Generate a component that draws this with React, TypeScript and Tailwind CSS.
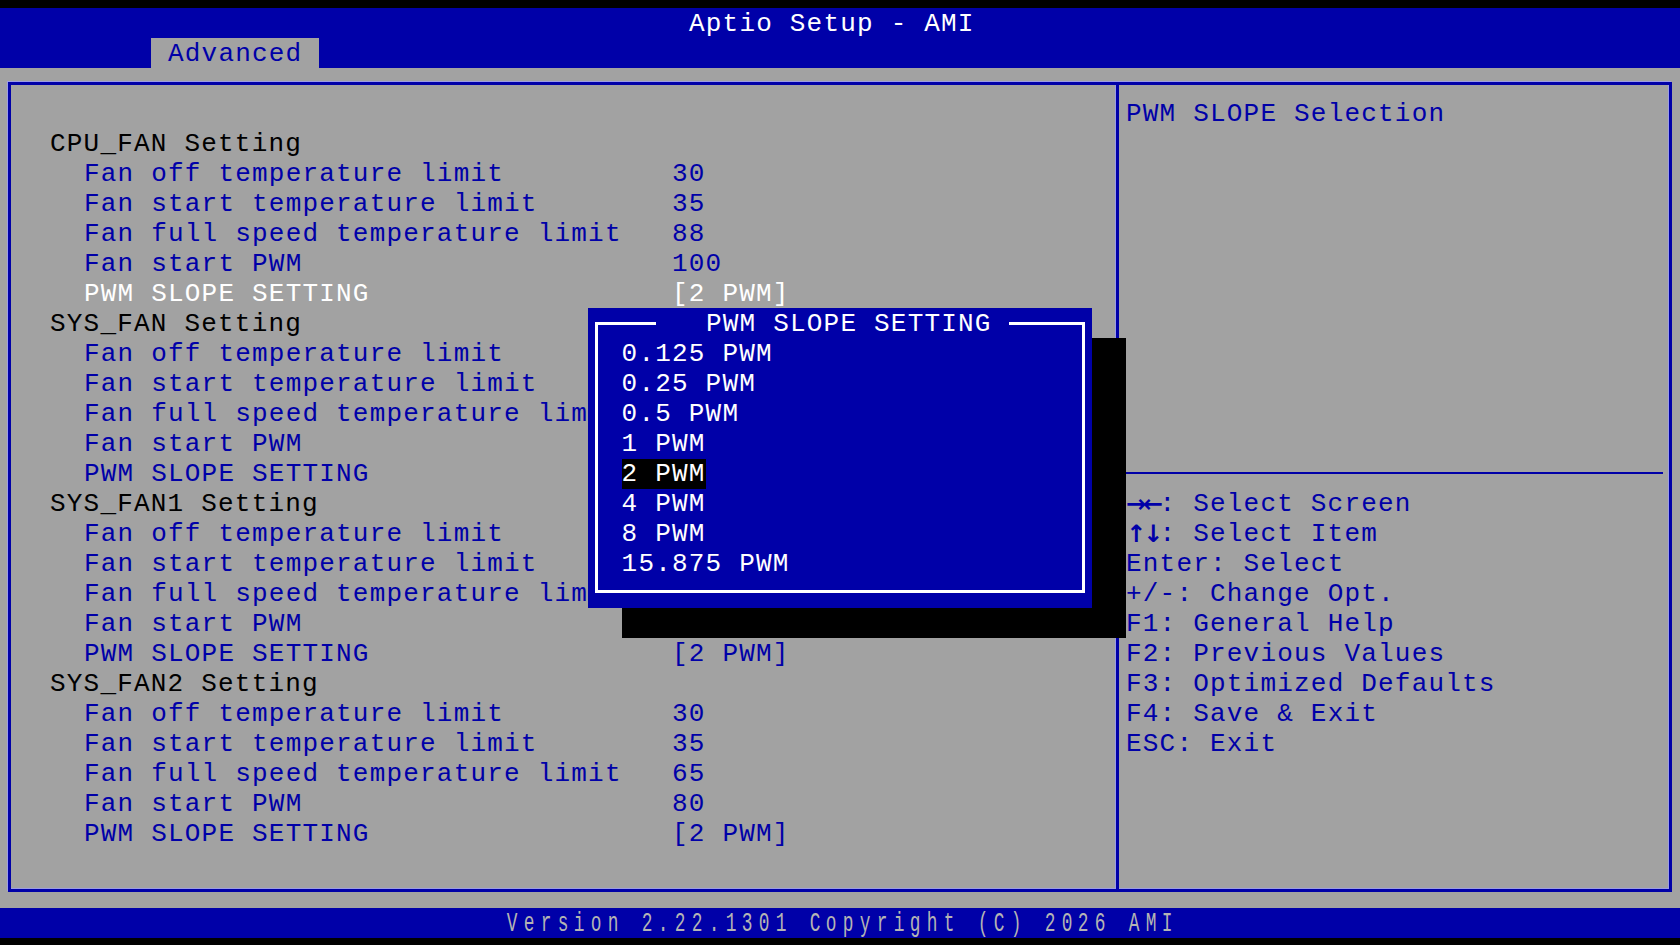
import React from "react";

// value "" = hidden under the popup / its shadow
const sections = [
  {
    title: "CPU_FAN Setting",
    items: [
      ["Fan off temperature limit", "30"],
      ["Fan start temperature limit", "35"],
      ["Fan full speed temperature limit", "88"],
      ["Fan start PWM", "100"],
      ["PWM SLOPE SETTING", "[2 PWM]"],
    ],
    selected: 4,
  },
  {
    title: "SYS_FAN Setting",
    items: [
      ["Fan off temperature limit", ""],
      ["Fan start temperature limit", ""],
      ["Fan full speed temperature limit", ""],
      ["Fan start PWM", ""],
      ["PWM SLOPE SETTING", ""],
    ],
    selected: -1,
  },
  {
    title: "SYS_FAN1 Setting",
    items: [
      ["Fan off temperature limit", ""],
      ["Fan start temperature limit", ""],
      ["Fan full speed temperature limit", ""],
      ["Fan start PWM", ""],
      ["PWM SLOPE SETTING", "[2 PWM]"],
    ],
    selected: -1,
  },
  {
    title: "SYS_FAN2 Setting",
    items: [
      ["Fan off temperature limit", "30"],
      ["Fan start temperature limit", "35"],
      ["Fan full speed temperature limit", "65"],
      ["Fan start PWM", "80"],
      ["PWM SLOPE SETTING", "[2 PWM]"],
    ],
    selected: -1,
  },
];

const options = ["0.125 PWM", "0.25 PWM", "0.5 PWM", "1 PWM", "2 PWM", "4 PWM", "8 PWM", "15.875 PWM"];

const keys: [string, string][] = [
  ["→←", ": Select Screen"],
  ["↑↓", ": Select Item"],
  ["", "Enter: Select"],
  ["", "+/-: Change Opt."],
  ["", "F1: General Help"],
  ["", "F2: Previous Values"],
  ["", "F3: Optimized Defaults"],
  ["", "F4: Save & Exit"],
  ["", "ESC: Exit"],
];

const footer = "Version 2.22.1301 Copyright (C) 2026 AMI";

const App = () => {
  return (
    <div className="relative w-[1680px] h-[945px] overflow-hidden bg-black font-['Liberation_Mono','DejaVu_Sans_Mono',monospace] text-[26px] leading-[30px] tracking-[1.2px] whitespace-pre">
      <div className="h-[8px]" />

      {/* title bar + tab */}
      <header className="h-[60px] bg-[#0000a8]">
        <div className="h-[30px] pt-[1px] pl-[689px] text-white">Aptio Setup - AMI</div>
        <div className="h-[30px] pl-[151px] flex">
          <div className="w-[168px] h-[30px] pt-[1px] pl-[17px] bg-[#a2a2a2] text-[#0000a8]">Advanced</div>
        </div>
      </header>

      {/* body */}
      <main className="h-[840px] bg-[#a2a2a2] pt-[14px] pl-[8px]">
        <div className="flex w-[1664px] h-[810px] border-[3px] border-[#0000a8] shadow-[-1px_-1px_0_#9c9ce6,inset_-1px_-1px_0_#9c9ce6]">
          <div className="w-[1105px] pt-[43px]">
            {sections.map((s) => (
              <div key={s.title}>
                <div className="h-[30px] pt-[1px] pl-[39px] text-black">{s.title}</div>
                {s.items.map(([label, value], i) => {
                  const sel = i === s.selected;
                  return (
                    <div key={label} className={`flex h-[30px] pt-[1px] pl-[73px] ${sel ? "text-white" : "text-[#0000a8]"}`}>
                      <span className="w-[588px]">{label}</span>
                      {value && <span>{value}</span>}
                    </div>
                  );
                })}
              </div>
            ))}
          </div>
          <div className="w-[3px] bg-[#0000a8] shadow-[-1px_0_0_#9c9ce6]" />
          <div className="flex-1 flex flex-col text-[#0000a8]">
            <div className="h-[387px] pt-[13px] pl-[7px]">
              <div className="h-[30px] pt-[1px]">PWM SLOPE Selection</div>
            </div>
            <div className="h-[2px] ml-[4px] mr-[6px] bg-[#0000a8]" />
            <div className="mt-[14px] pl-[7px]">
              {keys.map(([arrows, text]) => (
                <div key={text} className="h-[30px] pt-[1px] flex">
                  {arrows && (
                    <span className="w-[33.6px] flex font-['DejaVu_Sans',sans-serif] font-bold text-[24px] tracking-[-3px]">
                      {arrows}
                    </span>
                  )}
                  <span>{text}</span>
                </div>
              ))}
            </div>
          </div>
        </div>
      </main>

      {/* footer */}
      <footer className="h-[30px] pt-[1px] pl-[504px] bg-[#0000a8] text-[#b4b4b4] tracking-normal text-[27px] flex">
        {footer.split("").map((c, i) => (
          <span key={i} className="inline-block w-[16.8px] text-center">
            <span className="inline-block scale-x-[0.66]">{c}</span>
          </span>
        ))}
      </footer>

      {/* popup shadow */}
      <div className="absolute left-[621.6px] top-[338px] w-[504px] h-[300px] bg-black" />

      {/* popup */}
      <div className="absolute left-[588px] top-[308px] w-[504px] h-[300px] bg-[#0000a8] text-white">
        <div className="absolute left-[7px] right-[7px] top-[14px] bottom-[15px] border-[3px] border-white" />
        <div className="absolute left-[68px] top-0 w-[353px] h-[30px] pt-[1px] pl-[50px] bg-[#0000a8]">PWM SLOPE SETTING</div>
        <div className="relative pt-[30px] pl-[33.6px]">
          {options.map((o) => (
            <div key={o} className="h-[30px] pt-[1px]">
              <span className={o === "2 PWM" ? "bg-black" : ""}>{o}</span>
            </div>
          ))}
        </div>
      </div>
    </div>
  );
};

export default App;
